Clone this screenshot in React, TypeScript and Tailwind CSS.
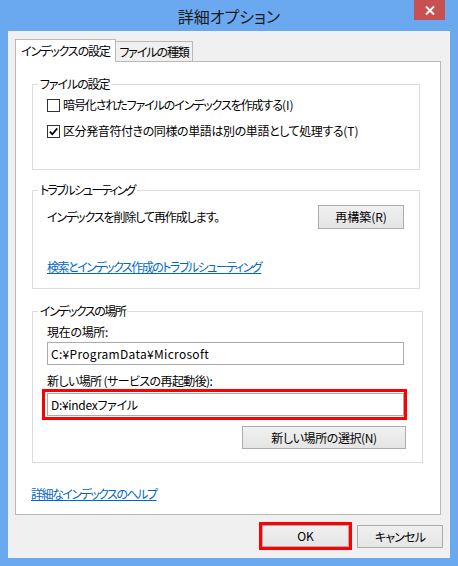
import { ReactNode } from "react";

const jp = "[font-family:'Noto_Sans_CJK_JP',sans-serif] [font-feature-settings:'palt']";

function Button({ children, className = "" }: { children: ReactNode; className?: string }) {
  return (
    <button
      className={`flex items-center justify-center border border-[#acacac] bg-linear-to-b from-[#f0f0f0] to-[#e5e5e5] text-[12px] leading-none text-black ${className}`}
    >
      {children}
    </button>
  );
}

function Checkbox({ checked = false }: { checked?: boolean }) {
  return (
    <span className="flex h-[13px] w-[13px] shrink-0 items-center justify-center border border-[#333333] bg-white">
      {checked && (
        <svg width="11" height="11" viewBox="0 0 11 11">
          <path d="M1.8 5.6 L4.3 8.2 L9.3 2.4" fill="none" stroke="#000" strokeWidth="1.7" />
        </svg>
      )}
    </span>
  );
}

function Group({
  title,
  className = "",
  legendClass = "",
  children,
}: {
  title: string;
  className?: string;
  legendClass?: string;
  children: ReactNode;
}) {
  return (
    <fieldset className={`w-[388px] border border-[#dcdcdc] ${className}`}>
      <legend className={`ml-[5px] px-[2px] text-[12px] leading-[16px] ${legendClass}`}>{title}</legend>
      {children}
    </fieldset>
  );
}

function TextBox({ value, className = "" }: { value: string; className?: string }) {
  return (
    <div
      className={`flex h-[23px] w-[357px] items-center whitespace-nowrap border border-[#ababab] bg-white pl-[3px] text-[12px] ${className}`}
    >
      {value}
    </div>
  );
}

// accelerator key suffix such as "(I)", kept at normal spacing
function Key({ k }: { k: string }) {
  return <span className="tracking-[0px]">({k})</span>;
}

export default function App() {
  return (
    <div className={`flex h-[566px] w-[458px] flex-col bg-[#6aa8f0] text-black ${jp}`}>
      {/* title bar */}
      <div className="flex h-[31px] items-start">
        <div className="w-[44px]" />
        <div className="flex h-[31px] flex-1 items-center justify-center pt-[1px]">
          <span className="text-[16px] text-[#1a1a1a]">詳細オプション</span>
        </div>
        <div className="mr-[7px] flex h-[20px] w-[31px] items-center justify-center bg-[#c75050]">
          <svg width="10" height="9" viewBox="0 0 10 9">
            <path d="M1 0.5 L9 8.5 M9 0.5 L1 8.5" stroke="#fff" strokeWidth="2" />
          </svg>
        </div>
        <div className="w-[6px]" />
      </div>

      {/* client area */}
      <div className="ml-[8px] flex h-[527px] w-[442px] flex-col bg-[#f0f0f0] pl-[7px] pt-[8px] tracking-[-1.1px]">
        <div className="flex h-[22px] items-end whitespace-nowrap text-[12px]">
          <div className="relative z-10 -mb-px flex h-[23px] w-[101px] items-center justify-center border border-b-0 border-[#b9b9b9] bg-white">
            インデックスの設定
          </div>
          <div className="flex h-[20px] w-[77px] items-center justify-center border border-b-0 border-l-0 border-[#b9b9b9] bg-[#f0f0f0]">
            ファイルの種類
          </div>
        </div>

        <div className="flex h-[454px] w-[426px] flex-col border border-[#b9b9b9] bg-white pl-[16px] pt-[14px] text-[12px]">
          <Group title="ファイルの設定">
            <div className="px-[14px] pb-[28px]">
              <label className="mt-[3px] flex h-[20px] items-center gap-[3px]">
                <Checkbox />
                <span>
                  暗号化されたファイルのインデックスを作成する<Key k="I" />
                </span>
              </label>
              <label className="mt-[6px] flex h-[20px] items-center gap-[3px]">
                <Checkbox checked />
                <span className="tracking-[-0.4px]">
                  区分発音符付きの同様の単語は別の単語として処理する<Key k="T" />
                </span>
              </label>
            </div>
          </Group>

          <Group title="トラブルシューティング" legendClass="tracking-[-1.9px]" className="mt-[12px]">
            <div className="pb-[13px] pl-[14px] pr-[15px]">
              <div className="mt-[7px] flex items-center justify-between">
                <span>インデックスを削除して再作成します。</span>
                <Button className="h-[24px] w-[86px] tracking-[0px]">再構築(R)</Button>
              </div>
              <a className="mt-[30px] block leading-[16px] tracking-[-1.5px] text-[#0066cc] underline">
                検索とインデックス作成のトラブルシューティング
              </a>
            </div>
          </Group>

          <Group title="インデックスの場所" legendClass="tracking-[-1.5px]" className="mt-[14px]">
            <div className="flex flex-col pb-[13px] pl-[14px] pr-[15px]">
              <span className="mt-[5px] leading-[16px] tracking-[-0.3px]">現在の場所:</span>
              <div className="mt-[2px]">
                <TextBox value="C:¥ProgramData¥Microsoft" className="tracking-[0.3px]" />
              </div>
              <span className="mt-[8px] leading-[16px] tracking-[-0.6px]">新しい場所 (サービスの再起動後):</span>
              <div className="-ml-[5px] w-fit border-[3px] border-[#ff0000] pb-[1px] pl-[2px] pt-[1px]">
                <TextBox value="D:¥indexファイル" className="tracking-[-0.3px]" />
              </div>
              <div className="mt-[6px] flex justify-end pr-[1px]">
                <Button className="h-[23px] w-[164px] border-[#3c9af0] tracking-[-0.4px]">新しい場所の選択(N)</Button>
              </div>
            </div>
          </Group>

          <a className="-ml-[1px] mt-[23px] block leading-[16px] tracking-[-1.5px] text-[#0066cc] underline">
            詳細なインデックスのヘルプ
          </a>
        </div>

        <div className="flex items-start justify-end pr-[7px]">
          <div className="mt-[7px] border-[3px] border-[#ff0000]">
            <Button className="h-[22px] w-[87px] tracking-[0px]">OK</Button>
          </div>
          <Button className="ml-[5px] mt-[10px] h-[23px] w-[86px] tracking-[-0.8px]">キャンセル</Button>
        </div>
      </div>
    </div>
  );
}
